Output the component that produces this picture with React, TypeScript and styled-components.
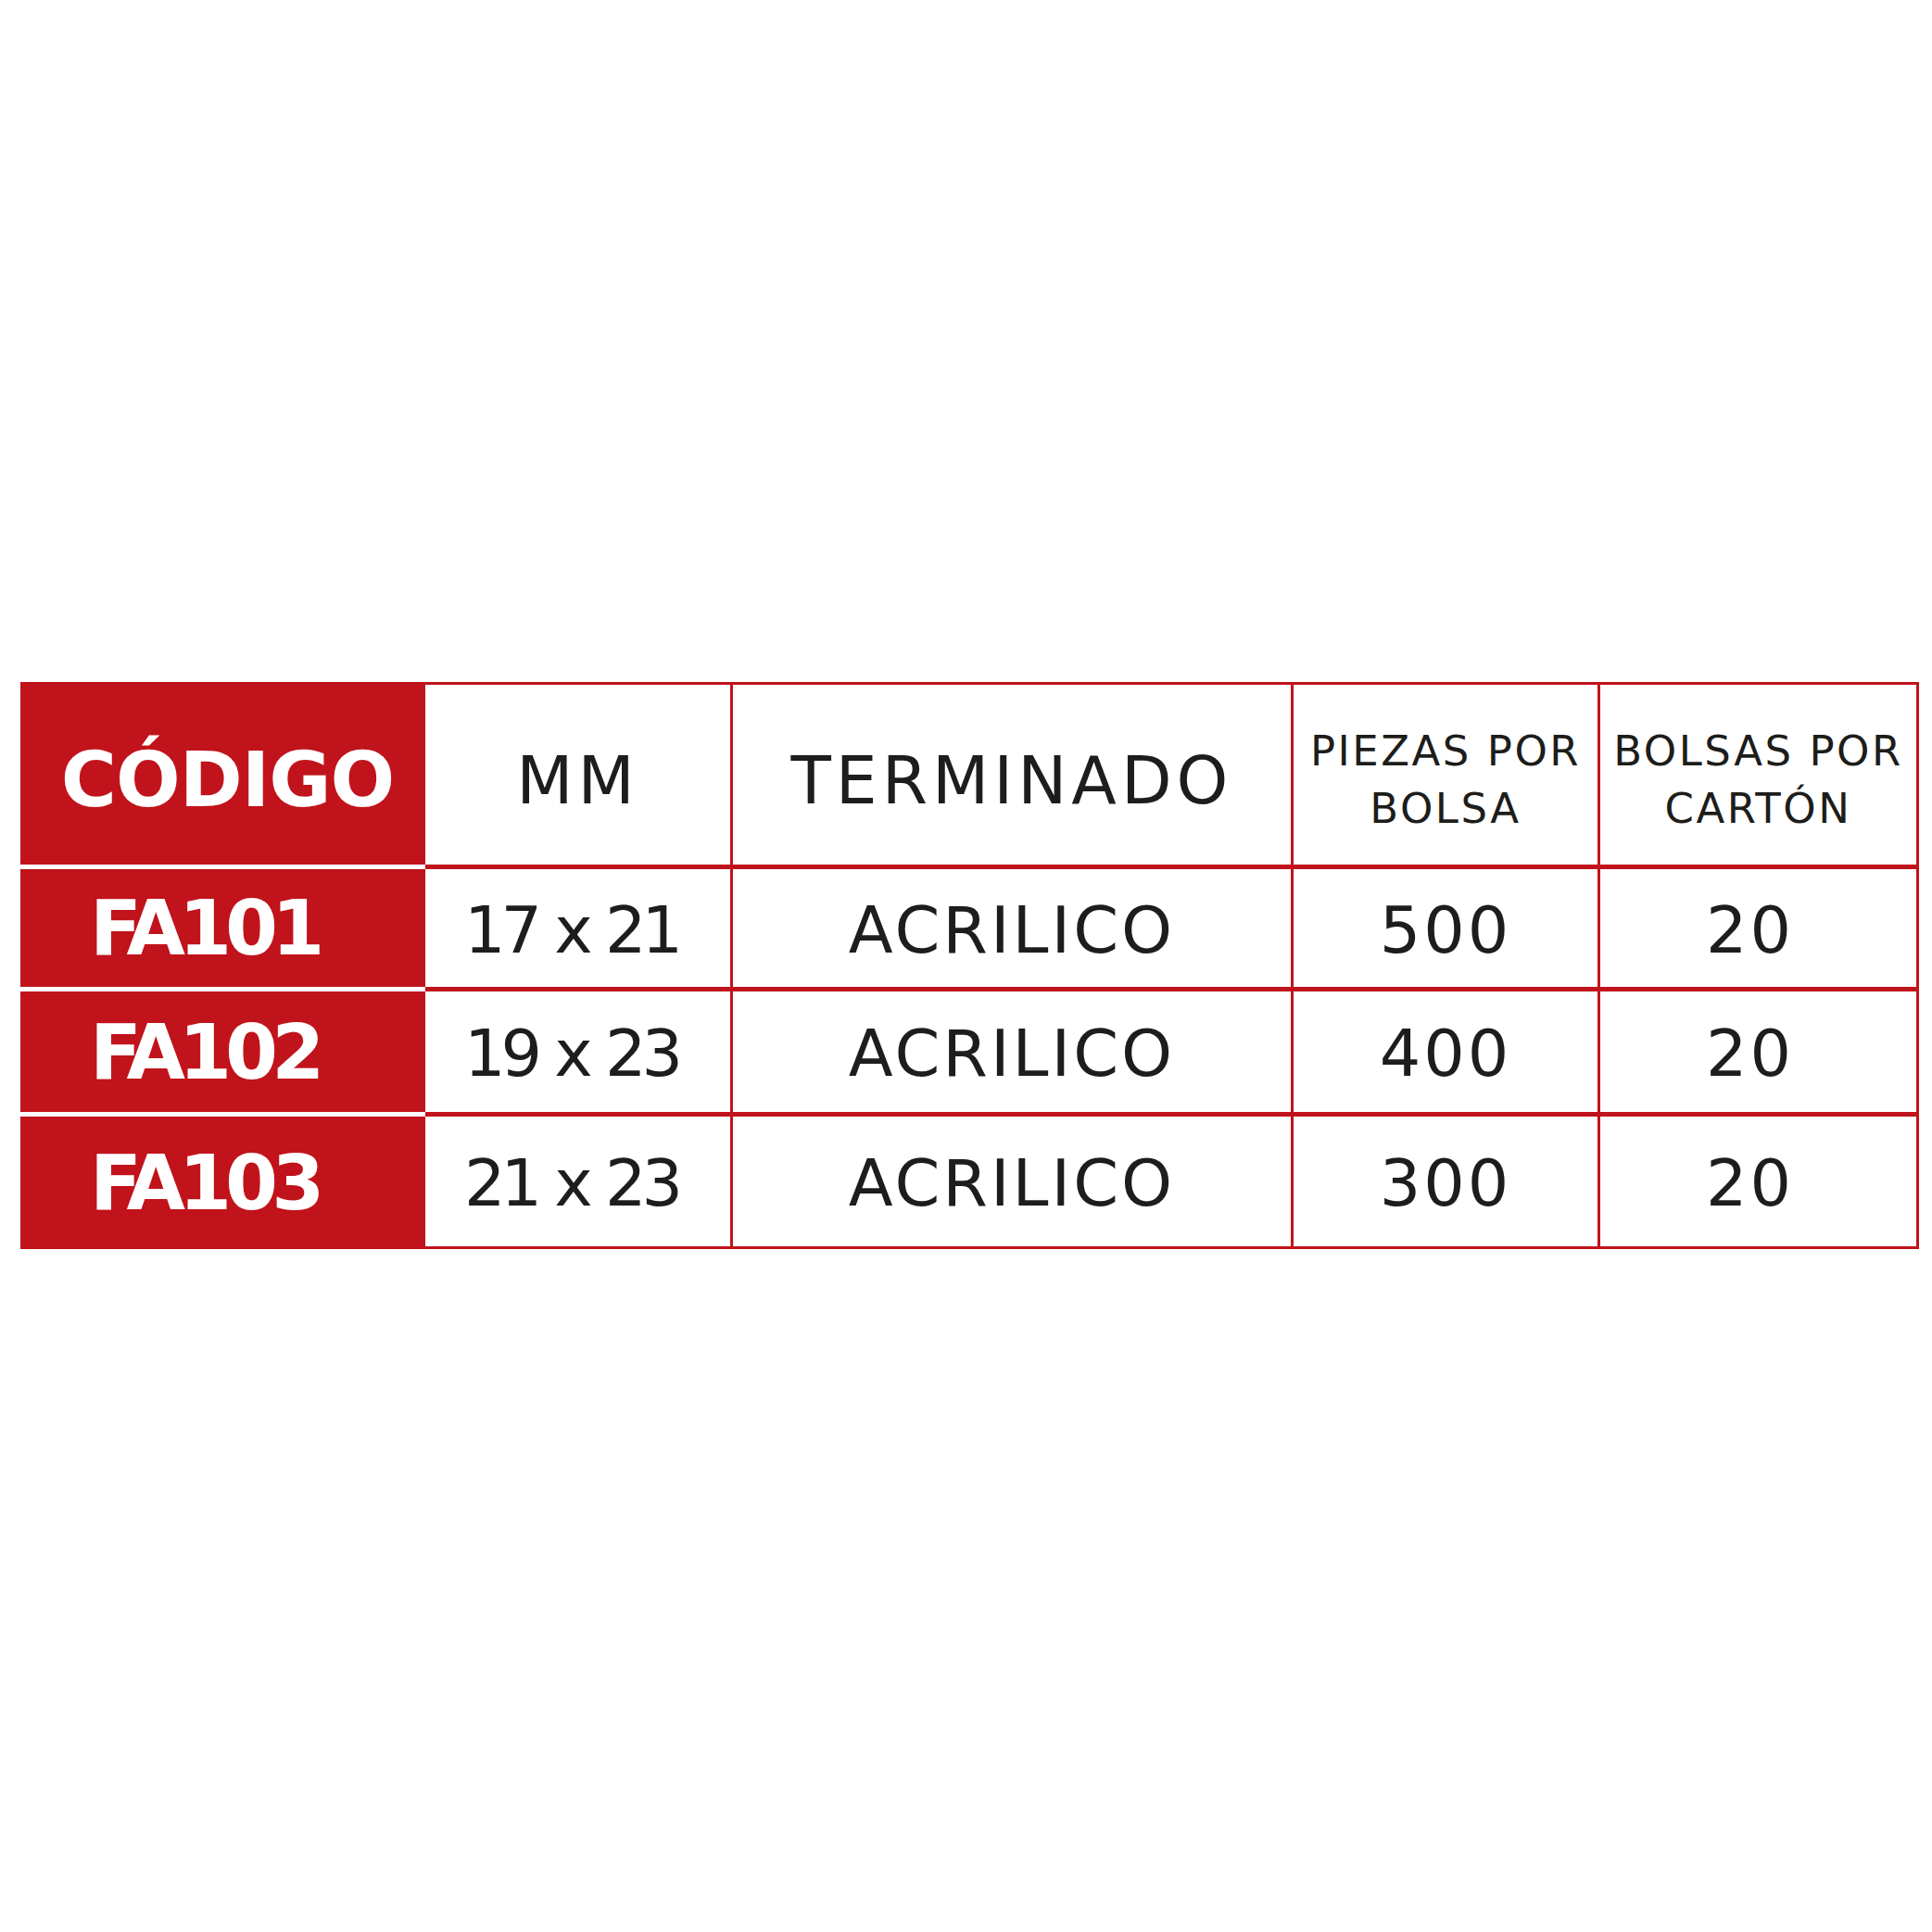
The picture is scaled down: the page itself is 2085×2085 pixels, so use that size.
import styled, { createGlobalStyle } from "styled-components";

const RED = "#c1131b";
const INK = "#1d1d1b";

const GlobalStyle = createGlobalStyle`
  html, body {
    margin: 0;
    padding: 0;
    background: #ffffff;
  }
  body {
    font-family: "DejaVu Sans", "Noto Sans", sans-serif;
  }
`;

const Page = styled.div`
  width: 2085px;
  height: 2085px;
  box-sizing: border-box;
  padding: 736px 0 0 22px;
  background: #ffffff;
`;

const Table = styled.div`
  display: grid;
  grid-template-columns: 437px 332px 605px 331px 344px;
  grid-template-rows: 202px 132px 135px 143px;
  width: 2049px;
`;

const CodeCell = styled.div<{ $head?: boolean; $last?: boolean }>`
  display: flex;
  align-items: center;
  justify-content: ${(p) => (p.$head ? "center" : "flex-start")};
  box-sizing: border-box;
  padding: ${(p) => (p.$head ? "14px 0 0 10px" : "0 0 0 75px")};
  background: ${RED};
  border-bottom: ${(p) => (p.$last ? "0" : "5px solid #ffffff")};
  color: #ffffff;
  font-weight: 700;
  font-size: 82px;
  letter-spacing: ${(p) => (p.$head ? "-1px" : "-7px")};
  white-space: nowrap;
`;

const Cell = styled.div<{
  $head?: boolean;
  $first?: boolean;
  $last?: boolean;
  $left?: boolean;
  $end?: boolean;
}>`
  display: flex;
  flex-direction: column;
  align-items: ${(p) => (p.$left ? "flex-start" : "center")};
  justify-content: center;
  box-sizing: border-box;
  padding: ${(p) =>
    p.$head ? "12px 0 0 0" : p.$left ? "4px 0 0 42px" : p.$end ? "4px 18px 0 0" : "4px 0 0 0"};
  background: #ffffff;
  border-top: ${(p) => (p.$first ? `3px solid ${RED}` : "0")};
  border-right: 3px solid ${RED};
  border-bottom: ${(p) => (p.$last ? "3px" : "5px")} solid ${RED};
  color: ${INK};
  white-space: nowrap;
`;

const HeadText = styled.span`
  font-size: 71px;
  letter-spacing: 5px;
  line-height: 1;
`;

const SmallHead = styled.span`
  font-size: 45px;
  letter-spacing: 2.5px;
  line-height: 62px;
  text-align: center;
`;

const Value = styled.span<{ $tight?: boolean }>`
  font-size: 70px;
  line-height: 1;
  letter-spacing: ${(p) => (p.$tight ? "-5px" : "3px")};
  word-spacing: ${(p) => (p.$tight ? "1px" : "0")};
`;

const rows = [
  { code: "FA101", mm: "17 x 21", finish: "ACRILICO", pieces: "500", bags: "20" },
  { code: "FA102", mm: "19 x 23", finish: "ACRILICO", pieces: "400", bags: "20" },
  { code: "FA103", mm: "21 x 23", finish: "ACRILICO", pieces: "300", bags: "20" },
];

export default function App() {
  return (
    <Page>
      <GlobalStyle />
      <Table>
        <CodeCell $head>CÓDIGO</CodeCell>
        <Cell $head $first>
          <HeadText>MM</HeadText>
        </Cell>
        <Cell $head $first>
          <HeadText>TERMINADO</HeadText>
        </Cell>
        <Cell $head $first>
          <SmallHead>
            PIEZAS POR
            <br />
            BOLSA
          </SmallHead>
        </Cell>
        <Cell $head $first>
          <SmallHead>
            BOLSAS POR
            <br />
            CARTÓN
          </SmallHead>
        </Cell>
        {rows.map((row, i) => {
          const last = i === rows.length - 1;
          return [
            <CodeCell key={row.code + "c"} $last={last}>
              {row.code}
            </CodeCell>,
            <Cell key={row.code + "m"} $last={last} $left>
              <Value $tight>{row.mm}</Value>
            </Cell>,
            <Cell key={row.code + "f"} $last={last}>
              <Value>{row.finish}</Value>
            </Cell>,
            <Cell key={row.code + "p"} $last={last}>
              <Value>{row.pieces}</Value>
            </Cell>,
            <Cell key={row.code + "b"} $last={last} $end>
              <Value>{row.bags}</Value>
            </Cell>,
          ];
        })}
      </Table>
    </Page>
  );
}
